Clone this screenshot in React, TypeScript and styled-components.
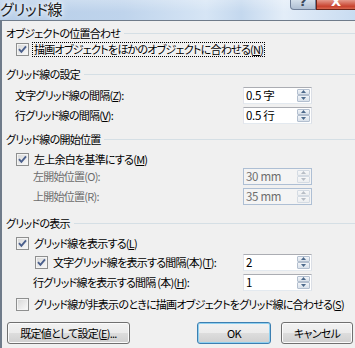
import React from "react";
import styled, { createGlobalStyle, css } from "styled-components";

const GlobalStyle = createGlobalStyle`
  html, body { margin: 0; padding: 0; }
  body {
    width: 355px;
    height: 348px;
    overflow: hidden;
    background: #f0f0f0;
    font-family: "Noto Sans CJK JP", "Noto Sans", sans-serif;
    font-size: 11px;
    letter-spacing: -0.75px;
    color: #000;
  }
  u { text-decoration-thickness: 1px; text-underline-offset: 1px; }
`;

const Window = styled.div`
  width: 355px;
  height: 348px;
  display: flex;
  flex-direction: column;
  overflow: hidden;
  font-feature-settings: "palt";
`;

const TitleBar = styled.div`
  flex: none;
  height: 20px;
  display: flex;
  align-items: flex-start;
  background:
    linear-gradient(180deg, rgba(255, 255, 255, 0.25), rgba(255, 255, 255, 0) 60%),
    linear-gradient(90deg, #b7cee8 0%, #bfd4ec 35%, #d6e5f5 58%, #c4d8ee 68%, #e3edf8 80%, #c9dcf1 100%);
`;

const TitleText = styled.div`
  font-size: 15px;
  line-height: 18px;
  letter-spacing: -0.5px;
  color: #1a1a1a;
  white-space: nowrap;
  text-shadow: 0 0 4px #fff, 0 0 8px #fff;
`;

const CaptionGroup = styled.div`
  margin-left: auto;
  display: flex;
`;

const CaptionButton = styled.div<{ $kind: "help" | "close" }>`
  height: 9px;
  display: flex;
  justify-content: center;
  align-items: flex-end;
  overflow: hidden;
  border: 1px solid;
  border-top: none;
  font-family: "DejaVu Sans", sans-serif;
  font-weight: bold;
  font-size: 13px;
  line-height: 14px;
  letter-spacing: 0;
  ${(p) =>
    p.$kind === "help"
      ? css`
          width: 24px;
          border-color: #6e7f99;
          border-radius: 0 0 0 4px;
          background: linear-gradient(#d3dfeb, #aebfd3);
          color: #3d4a5c;
        `
      : css`
          width: 38px;
          border-color: #6b2418;
          border-right: none;
          background: linear-gradient(#e49a8c, #c8432f 70%, #d7674f);
          color: #fff;
        `}
`;

const Client = styled.div`
  flex: 1;
  display: flex;
  flex-direction: column;
  background: #f0f0f0;
  border-top: 1px solid #6f7b8a;
  border-left: 2px solid #6f7b8a;
  padding-left: 4px;
`;

const GroupHeader = styled.div<{ $mt: number }>`
  display: flex;
  align-items: center;
  height: 14px;
  margin-top: ${(p) => p.$mt}px;
  white-space: nowrap;
  line-height: 14px;
  &::after {
    content: "";
    flex: 1;
    height: 1px;
    margin-left: 4px;
    background: #d5dfe5;
  }
`;

const Row = styled.div<{ $mt?: number; $h: number; $indent: number }>`
  display: flex;
  align-items: center;
  height: ${(p) => p.$h}px;
  margin-top: ${(p) => p.$mt ?? 0}px;
  padding-left: ${(p) => p.$indent}px;
  padding-right: 43px;
  white-space: nowrap;
`;

const Label = styled.span<{ $disabled?: boolean }>`
  flex: 1;
  line-height: 14px;
  color: ${(p) => (p.$disabled ? "#6d6d6d" : "#000")};
`;

const CheckLabel = styled.span<{ $focus?: boolean }>`
  margin-left: 3px;
  padding: 0 1px;
  line-height: 13px;
  border: 1px ${(p) => (p.$focus ? "dotted #000" : "solid transparent")};
`;

const Box = styled.span`
  flex: none;
  width: 13px;
  height: 13px;
  box-sizing: border-box;
  border: 1px solid #8e8f8f;
  background: linear-gradient(135deg, #d6d6d6, #fbfbfb);
  box-shadow: inset 0 0 0 1px #f4f4f4;
  display: flex;
  align-items: center;
  justify-content: center;
`;

const Spin = styled.div<{ $disabled?: boolean }>`
  flex: none;
  width: 69px;
  height: 17px;
  box-sizing: border-box;
  display: flex;
  padding: 1px;
  border: 1px solid;
  font-size: 11.5px;
  letter-spacing: -0.3px;
  ${(p) =>
    p.$disabled
      ? css`
          border-color: #aebfd4;
          background: #f4f4f4;
          color: #6d6d6d;
        `
      : css`
          border-color: #abadb3 #dbdfe6 #e3e9ef #e2e3ea;
          background: #fff;
          color: #000;
        `}
`;

const SpinValue = styled.span`
  flex: 1;
  padding-left: 1px;
  line-height: 13px;
`;

const SpinButtons = styled.div`
  width: 13px;
  display: flex;
  flex-direction: column;
`;

const SpinButton = styled.div<{ $disabled?: boolean }>`
  flex: 1;
  box-sizing: border-box;
  border: 1px solid ${(p) => (p.$disabled ? "#d4dbe3" : "#b3bfcf")};
  border-radius: 1px;
  background: ${(p) =>
    p.$disabled ? "linear-gradient(#f6f7f8, #eceef0)" : "linear-gradient(#f2f5f9, #d9e1ea)"};
  display: flex;
  align-items: center;
  justify-content: center;
`;

const ButtonBar = styled.div`
  display: flex;
  align-items: center;
  margin-top: 11px;
  padding: 0 2px 0 1px;
  gap: 10px;
`;

const PushButton = styled.button<{ $w: number; $default?: boolean }>`
  width: ${(p) => p.$w}px;
  height: 22px;
  box-sizing: border-box;
  padding: 0;
  font-family: inherit;
  font-feature-settings: "palt";
  font-size: 11px;
  letter-spacing: -0.75px;
  color: #000;
  border-radius: 3px;
  border: 1px solid ${(p) => (p.$default ? "#3c7fb1" : "#707070")};
  background: linear-gradient(#f2f2f2 0%, #ebebeb 50%, #dddddd 50%, #cfcfcf 100%);
  box-shadow: inset 0 0 0 1px ${(p) => (p.$default ? "#8fd0f0" : "#fbfbfb")};
`;

const Spacer = styled.div`
  flex: 1;
`;

function Check({ checked }: { checked: boolean }) {
  return (
    <Box>
      {checked && (
        <svg width="9" height="9" viewBox="0 0 9 9">
          <path d="M1 4.2 L3.4 6.8 L8 1.3" fill="none" stroke="#4a5f8c" strokeWidth="1.9" />
        </svg>
      )}
    </Box>
  );
}

function Arrow({ up, disabled }: { up: boolean; disabled?: boolean }) {
  return (
    <svg width="5" height="3" viewBox="0 0 5 3">
      <path d={up ? "M0 3 L2.5 0 L5 3 Z" : "M0 0 L2.5 3 L5 0 Z"} fill={disabled ? "#b8bec6" : "#4d6a8c"} />
    </svg>
  );
}

function SpinBox({ value, disabled }: { value: string; disabled?: boolean }) {
  return (
    <Spin $disabled={disabled}>
      <SpinValue>{value}</SpinValue>
      <SpinButtons>
        <SpinButton $disabled={disabled}>
          <Arrow up disabled={disabled} />
        </SpinButton>
        <SpinButton $disabled={disabled}>
          <Arrow up={false} disabled={disabled} />
        </SpinButton>
      </SpinButtons>
    </Spin>
  );
}

export default function App() {
  return (
    <>
      <GlobalStyle />
      <Window>
        <TitleBar>
          <TitleText>グリッド線</TitleText>
          <CaptionGroup>
            <CaptionButton $kind="help">?</CaptionButton>
            <CaptionButton $kind="close">X</CaptionButton>
          </CaptionGroup>
        </TitleBar>
        <Client>
          <GroupHeader $mt={5}>オブジェクトの位置合わせ</GroupHeader>
          <Row $mt={1} $h={16} $indent={10}>
            <Check checked />
            <CheckLabel $focus>
              描画オブジェクトをほかのオブジェクトに合わせる(<u>N</u>)
            </CheckLabel>
          </Row>

          <GroupHeader $mt={10}>グリッド線の設定</GroupHeader>
          <Row $mt={4} $h={20} $indent={9}>
            <Label>
              文字グリッド線の間隔(<u>Z</u>):
            </Label>
            <SpinBox value="0.5 字" />
          </Row>
          <Row $h={20} $indent={9}>
            <Label>
              行グリッド線の間隔(<u>V</u>):
            </Label>
            <SpinBox value="0.5 行" />
          </Row>

          <GroupHeader $mt={7}>グリッド線の開始位置</GroupHeader>
          <Row $mt={6} $h={14} $indent={10}>
            <Check checked />
            <CheckLabel>
              左上余白を基準にする(<u>M</u>)
            </CheckLabel>
          </Row>
          <Row $h={20} $indent={27}>
            <Label $disabled>左開始位置(O):</Label>
            <SpinBox value="30 mm" disabled />
          </Row>
          <Row $h={20} $indent={27}>
            <Label $disabled>上開始位置(R):</Label>
            <SpinBox value="35 mm" disabled />
          </Row>

          <GroupHeader $mt={10}>グリッドの表示</GroupHeader>
          <Row $mt={6} $h={14} $indent={10}>
            <Check checked />
            <CheckLabel>
              グリッド線を表示する(<u>L</u>)
            </CheckLabel>
          </Row>
          <Row $mt={2} $h={20} $indent={29}>
            <Check checked />
            <CheckLabel>
              文字グリッド線を表示する間隔(本)(<u>T</u>):
            </CheckLabel>
            <Spacer />
            <SpinBox value="2" />
          </Row>
          <Row $h={20} $indent={27}>
            <Label>
              行グリッド線を表示する間隔 (本)(<u>H</u>):
            </Label>
            <SpinBox value="1" />
          </Row>
          <Row $mt={5} $h={14} $indent={10}>
            <Check checked={false} />
            <CheckLabel>
              グリッド線が非表示のときに描画オブジェクトをグリッド線に合わせる(<u>S</u>)
            </CheckLabel>
          </Row>

          <ButtonBar>
            <PushButton $w={123}>
              既定値として設定(<u>E</u>)...
            </PushButton>
            <Spacer />
            <PushButton $w={74} $default>
              OK
            </PushButton>
            <PushButton $w={72}>キャンセル</PushButton>
          </ButtonBar>
        </Client>
      </Window>
    </>
  );
}
